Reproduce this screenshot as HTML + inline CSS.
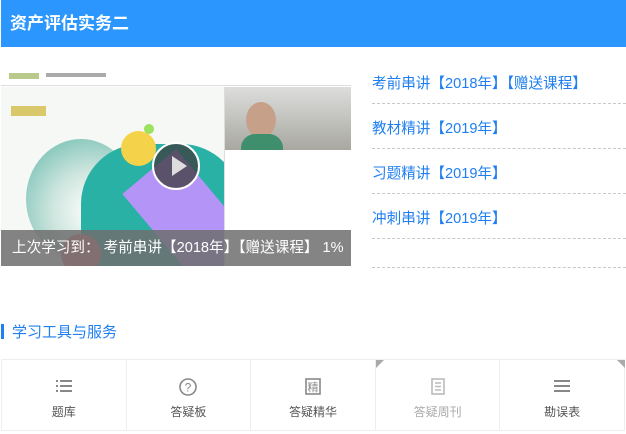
<!DOCTYPE html>
<html><head><meta charset="utf-8"><style>
*{margin:0;padding:0;box-sizing:border-box}
body{width:626px;height:434px;background:#fff;font-family:"Liberation Sans","Noto Sans CJK SC",sans-serif;position:relative;overflow:hidden}
.hd{position:absolute;left:1px;top:0;width:625px;height:47px;background:#2b96fd;color:#fff;font-size:17px;font-weight:bold;line-height:47px;padding-left:9px}
.vid{position:absolute;left:1px;top:69px;width:350px;height:197px;background:#fff;overflow:hidden}
.it{position:absolute;left:372px;width:254px;color:#1f7ff0;font-size:14.6px;white-space:nowrap}
.ln{position:absolute;left:372px;width:254px;border-top:1px dashed #c8c8c8}
.grid{position:absolute;left:1px;top:359px;width:624px;height:72px;border:1px solid #eee;display:flex}
.c{flex:1;border-right:1px solid #eee;text-align:center;position:relative}
.c:last-child{border-right:none}
.c svg{position:absolute;left:50%;top:18px;transform:translateX(-50%)}
.c span{position:absolute;left:0;right:0;top:43px;font-size:12px;color:#555}
</style></head><body>
<div class="hd">资产评估实务二</div>
<div class="vid">
 <div style="position:absolute;left:0;top:0;width:350px;height:17px;background:#fff;border-bottom:1px solid #ddd"></div>
 <div style="position:absolute;left:8px;top:4px;width:30px;height:6px;background:#b9c98c"></div>
 <div style="position:absolute;left:45px;top:4px;width:60px;height:4px;background:#aaa"></div>
 <div style="position:absolute;left:0;top:18px;width:223px;height:179px;background:#f6f8f6"></div>
 <div style="position:absolute;left:25px;top:70px;width:110px;height:120px;border-radius:50%;background:radial-gradient(circle at 60% 60%,#fff,#cfe6df 40%,#5fb6a8)"></div>
 <div style="position:absolute;left:80px;top:75px;width:160px;height:130px;border-radius:60px 60px 0 0;background:#2ab1a6"></div>
 <div style="position:absolute;top:80px;width:120px;height:70px;background:#b495f7;transform:rotate(50deg);transform-origin:0 0;left:175px"></div>
 <div style="position:absolute;left:120px;top:62px;width:35px;height:35px;border-radius:50%;background:#f4d34a"></div>
 <div style="position:absolute;left:143px;top:55px;width:10px;height:10px;border-radius:50%;background:#9be25e"></div>
 <div style="position:absolute;left:10px;top:37px;width:35px;height:10px;background:#d9c96a"></div>
 <div style="position:absolute;left:60px;top:165px;width:40px;height:40px;border-radius:50%;background:#f2737f"></div>
 <div style="position:absolute;left:223px;top:18px;width:127px;height:179px;background:#fff;border-left:1px solid #ddd"></div>
 <div style="position:absolute;left:224px;top:18px;width:126px;height:63px;background:linear-gradient(#ddd,#a8a8a0)"></div>
 <div style="position:absolute;left:245px;top:33px;width:30px;height:36px;border-radius:50%;background:#c6a088"></div>
 <div style="position:absolute;left:240px;top:65px;width:42px;height:16px;border-radius:14px 14px 0 0;background:#3f8f6d"></div>
 <div style="position:absolute;left:151px;top:73px;width:48px;height:48px;border-radius:50%;background:rgba(60,60,60,.75);border:2px solid #fff"></div>
 <div style="position:absolute;left:171px;top:87px;width:0;height:0;border-left:15px solid #ddd;border-top:10px solid transparent;border-bottom:10px solid transparent"></div>
 <div style="position:absolute;left:0;top:161px;width:350px;height:36px;background:rgba(110,110,110,.85);color:#fff;font-size:14.6px;line-height:36px;padding-left:11px;white-space:nowrap">上次学习到： 考前串讲【2018年】【赠送课程】 1%</div>
</div>
<div class="it" style="top:72px">考前串讲【2018年】【赠送课程】</div>
<div class="ln" style="top:103px"></div>
<div class="it" style="top:117px">教材精讲【2019年】</div>
<div class="ln" style="top:148px"></div>
<div class="it" style="top:162px">习题精讲【2019年】</div>
<div class="ln" style="top:193px"></div>
<div class="it" style="top:207px">冲刺串讲【2019年】</div>
<div class="ln" style="top:238px"></div>
<div class="ln" style="top:267px"></div>
<div style="position:absolute;left:1px;top:324px;width:3px;height:15px;background:#1f7ff0"></div>
<div style="position:absolute;left:12px;top:321px;font-size:15px;color:#1f7ff0">学习工具与服务</div>
<div class="grid">
 <div class="c"><svg width="16" height="16" viewBox="0 0 16 16" fill="#888"><rect x="0" y="2" width="2" height="2"/><rect x="4" y="2" width="12" height="2"/><rect x="0" y="7" width="2" height="2"/><rect x="4" y="7" width="12" height="2"/><rect x="0" y="12" width="2" height="2"/><rect x="4" y="12" width="12" height="2"/></svg><span>题库</span></div>
 <div class="c"><svg width="18" height="18" viewBox="0 0 18 18"><circle cx="9" cy="9" r="8" fill="none" stroke="#888" stroke-width="1.6"/><text x="9" y="13.5" font-size="12" text-anchor="middle" fill="#888" font-family="Liberation Sans">?</text></svg><span>答疑板</span></div>
 <div class="c"><svg width="16" height="17" viewBox="0 0 16 17"><rect x="1" y="1" width="14" height="15" fill="none" stroke="#888" stroke-width="1.6"/><text x="8" y="13" font-size="11" text-anchor="middle" fill="#888" font-family="Noto Sans CJK SC">精</text></svg><span>答疑精华</span></div>
 <div class="c"><div style="position:absolute;left:0;top:0;border-top:8px solid #aaa;border-right:8px solid transparent"></div><svg width="14" height="17" viewBox="0 0 14 17" fill="none" stroke="#bbb" stroke-width="1.6"><rect x="1" y="1" width="12" height="15"/><path d="M4 5h6M4 8.5h6M4 12h6"/></svg><span style="color:#aaa">答疑周刊</span></div>
 <div class="c"><svg width="16" height="16" viewBox="0 0 16 16" fill="#888"><rect x="0" y="2" width="16" height="2"/><rect x="0" y="7" width="16" height="2"/><rect x="0" y="12" width="16" height="2"/></svg><span>勘误表</span><div style="position:absolute;right:-1px;top:0;border-top:8px solid #aaa;border-left:8px solid transparent"></div></div>
</div>
</body></html>
